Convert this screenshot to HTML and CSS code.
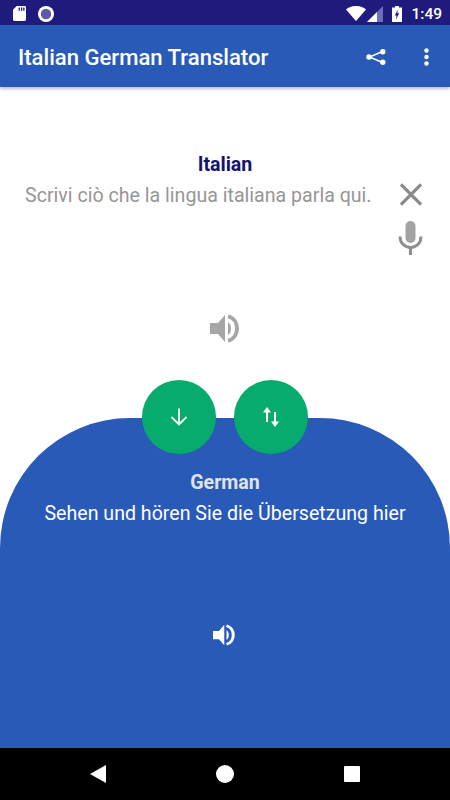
FILE: index.html
```html
<!DOCTYPE html>
<html lang="en">
<head>
<meta charset="utf-8">
<title>Italian German Translator</title>
<link rel="stylesheet" href="styles.css">
</head>
<body>
<div class="screen">
  <header class="status">
    <div class="status-left">
      <svg class="sd" viewBox="0 0 14 16"><path d="M4 0H12.500A1.500 1.500 0 0 1 14 1.500V14.500A1.500 1.500 0 0 1 12.500 16H1.500A1.500 1.500 0 0 1 0 14.500V4Z" fill="#fff"/><path d="M6 1.500h1.400v3.500H6ZM8.600 1.500H10v3.500H8.600ZM11 1.500h1.400v3.500H11Z" fill="#1f1b7c"/></svg>
      <svg class="rec" viewBox="0 0 17 17"><circle cx="8.500" cy="8.500" r="8.500" fill="#fff"/><circle cx="8.500" cy="8.500" r="5.500" fill="#5c5aa8"/></svg>
    </div>
    <div class="status-right">
      <svg class="wifi" viewBox="0 0 20 15"><path d="M0 3.500C5.500-1.200 14.500-1.200 20 3.500L10 15Z" fill="#fff"/></svg>
      <svg class="signal" viewBox="0 0 16 16"><path d="M16 0V16H0Z" fill="#6f6db5"/><path d="M10 6V16H0Z" fill="#fff"/></svg>
      <svg class="batt" viewBox="0 0 10 16"><path d="M3 0H7V1.500H10V16H0V1.500H3Z" fill="#fff"/><path d="M5.800 3.500 2.800 9.500H4.600L4 13.500 7.200 7.200H5.300Z" fill="#1f1b7c"/></svg>
      <span class="time">1:49</span>
    </div>
  </header>
  <nav class="appbar">
    <h1 class="title">Italian German Translator</h1>
    <svg class="share" viewBox="0 0 20 16"><path d="M16.500 2.500 3.500 8l13 5.500" fill="none" stroke="#fff" stroke-width="1.400"/><circle cx="16.800" cy="2.800" r="2.700" fill="#fff"/><circle cx="3" cy="8" r="2.700" fill="#fff"/><circle cx="16.800" cy="13.200" r="2.700" fill="#fff"/></svg>
    <svg class="more" viewBox="0 0 5 18"><circle cx="2.500" cy="2.500" r="2.200" fill="#fff"/><circle cx="2.500" cy="9" r="2.200" fill="#fff"/><circle cx="2.500" cy="15.500" r="2.200" fill="#fff"/></svg>
  </nav>
  <main class="content">
    <section class="source">
      <h2 class="lang-source">Italian</h2>
      <div class="input-row">
        <p class="placeholder">Scrivi ciò che la lingua italiana parla qui.</p>
        <div class="side-tools">
          <svg class="close" viewBox="0 0 24 24"><path d="M1.500 1.500 22.500 22.500M22.500 1.500 1.500 22.500" stroke="#8a8a8a" stroke-width="3.400" fill="none"/></svg>
          <svg class="mic" viewBox="0 0 24 34"><rect x="7" y="0" width="10" height="22" rx="5" fill="#a3a3a3"/><path d="M1.500 15.500C1.500 30 22.500 30 22.500 15.500" fill="none" stroke="#8f8f8f" stroke-width="3"/><path d="M12 26V34" stroke="#8f8f8f" stroke-width="3.200"/></svg>
        </div>
      </div>
      <svg class="speaker speaker-source" viewBox="0 0 32 32" preserveAspectRatio="none"><path d="M0 10H8L15 1V31L8 22H0Z" fill="#a6a6a6"/><path d="M18 9C22 11 22 21 18 23Z" fill="#a6a6a6"/><path d="M18 2.500C30 6 30 26 18 29.500" fill="none" stroke="#a6a6a6" stroke-width="4"/></svg>
    </section>
    <section class="target">
      <div class="actions">
        <button class="fab"><svg class="fab-down" viewBox="0 0 18 18"><path d="M9 0.500V16M1.500 9 9 16.500 16.500 9" fill="none" stroke="#fff" stroke-width="1.800"/></svg></button>
        <button class="fab"><svg class="fab-swap" viewBox="0 0 16 20"><path d="M4 15V5" stroke="#fff" stroke-width="2"/><path d="M0 5.500 4 0 8 5.500Z" fill="#fff"/><path d="M12 5V15" stroke="#fff" stroke-width="2"/><path d="M8 14.500 12 20 16 14.500Z" fill="#fff"/></svg></button>
      </div>
      <h2 class="lang-target">German</h2>
      <p class="translation">Sehen und hören Sie die Übersetzung hier</p>
      <svg class="speaker speaker-target" viewBox="0 0 32 32" preserveAspectRatio="none"><path d="M0 10H8L15 1V31L8 22H0Z" fill="#fff"/><path d="M18 9C22 11 22 21 18 23Z" fill="#fff"/><path d="M18 2.500C30 6 30 26 18 29.500" fill="none" stroke="#fff" stroke-width="4"/></svg>
    </section>
  </main>
  <footer class="navbar">
    <svg class="nav-back" viewBox="0 0 16 18"><path d="M0 9 16 0V18Z" fill="#fff"/></svg>
    <svg class="nav-home" viewBox="0 0 18 18"><circle cx="9" cy="9" r="9" fill="#fff"/></svg>
    <svg class="nav-recent" viewBox="0 0 16 16"><rect width="16" height="16" rx="1" fill="#fff"/></svg>
  </footer>
</div>
</body>
</html>
```
FILE: styles.css
```css
html, body {
  margin: 0;
  padding: 0;
}
body {
  font-family: Roboto, "Liberation Sans", sans-serif;
  background: #fff;
}
.screen {
  width: 450px;
  height: 800px;
  display: flex;
  flex-direction: column;
  overflow: hidden;
}
svg {
  display: block;
  flex: none;
}
.status {
  height: 25px;
  padding-top: 2px;
  box-sizing: border-box;
  background: #1f1b7c;
  color: #fff;
  display: flex;
  justify-content: space-between;
  align-items: center;
  flex: none;
}
.status-left {
  display: flex;
  align-items: center;
  gap: 12px;
  padding-left: 13px;
}
.sd { width: 13px; height: 15px; }
.rec { width: 16px; height: 16px; }
.status-right {
  display: flex;
  align-items: center;
  padding-right: 8px;
}
.wifi { width: 20px; height: 15px; margin-right: 1px; }
.signal { width: 16px; height: 16px; margin-right: 9px; }
.batt { width: 10px; height: 16px; margin-right: 9px; }
.time { font-size: 15.500px; font-weight: 500; }
.appbar {
  height: 62px;
  background: #2a5ab8;
  display: flex;
  align-items: center;
  flex: none;
  padding: 2px 0 0 18px;
  box-sizing: border-box;
  box-shadow: 0 2px 3px rgba(0, 0, 0, 0.25);
  position: relative;
  z-index: 1;
}
.title {
  margin: 0;
  flex: 1;
  color: #fff;
  font-size: 22.100px;
  font-weight: 500;
}
.share { width: 20px; height: 16px; margin-right: 38px; }
.more { width: 5px; height: 18px; margin-right: 21px; }
.content {
  flex: 1;
  display: flex;
  flex-direction: column;
  min-height: 0;
}
.source {
  height: 331px;
  flex: none;
  display: flex;
  flex-direction: column;
  align-items: center;
  padding-top: 67px;
  box-sizing: border-box;
}
.lang-source, .lang-target {
  margin: 0;
  font-size: 19.600px;
  font-weight: 700;
  line-height: 22px;
  text-align: center;
}
.lang-source { color: #14146e; }
.input-row {
  width: 100%;
  height: 117px;
  display: flex;
  justify-content: space-between;
  padding: 0 27px 0 25px;
  box-sizing: border-box;
}
.placeholder {
  margin: 0;
  font-size: 19.600px;
  line-height: 22px;
  color: #969696;
  padding-top: 9px;
}
.side-tools {
  display: flex;
  flex-direction: column;
  align-items: center;
  gap: 15px;
  padding-top: 7px;
}
.close { width: 24px; height: 23px; }
.mic { width: 25px; height: 34px; }
.speaker-source { width: 32px; height: 29px; margin-left: 1px; margin-top: 21px; }
.target {
  flex: 1;
  background: #2a5ab8;
  border-radius: 130px 130px 0 0;
  position: relative;
  display: flex;
  flex-direction: column;
  align-items: center;
  padding-top: 54px;
  box-sizing: border-box;
}
.actions {
  position: absolute;
  top: -38px;
  left: 142px;
  display: flex;
  gap: 18px;
}
.fab {
  width: 74px;
  height: 74px;
  border: 0;
  padding: 0;
  border-radius: 50%;
  background: #06ab6d;
  display: flex;
  align-items: center;
  justify-content: center;
}
.fab-down { width: 18px; height: 18px; }
.fab-swap { width: 16px; height: 20px; }
.lang-target { color: #e2e2e6; }
.translation {
  margin: 9px 0 0;
  font-size: 19.600px;
  line-height: 22px;
  color: #fff;
  text-align: center;
}
.speaker-target { width: 24px; height: 22px; margin-top: 99px; }
.navbar {
  height: 52px;
  background: #000;
  flex: none;
  display: flex;
  align-items: center;
  justify-content: space-between;
  padding: 0 90px;
}
.nav-back { width: 16px; height: 18px; }
.nav-home { width: 18px; height: 18px; }
.nav-recent { width: 16px; height: 16px; }
```
